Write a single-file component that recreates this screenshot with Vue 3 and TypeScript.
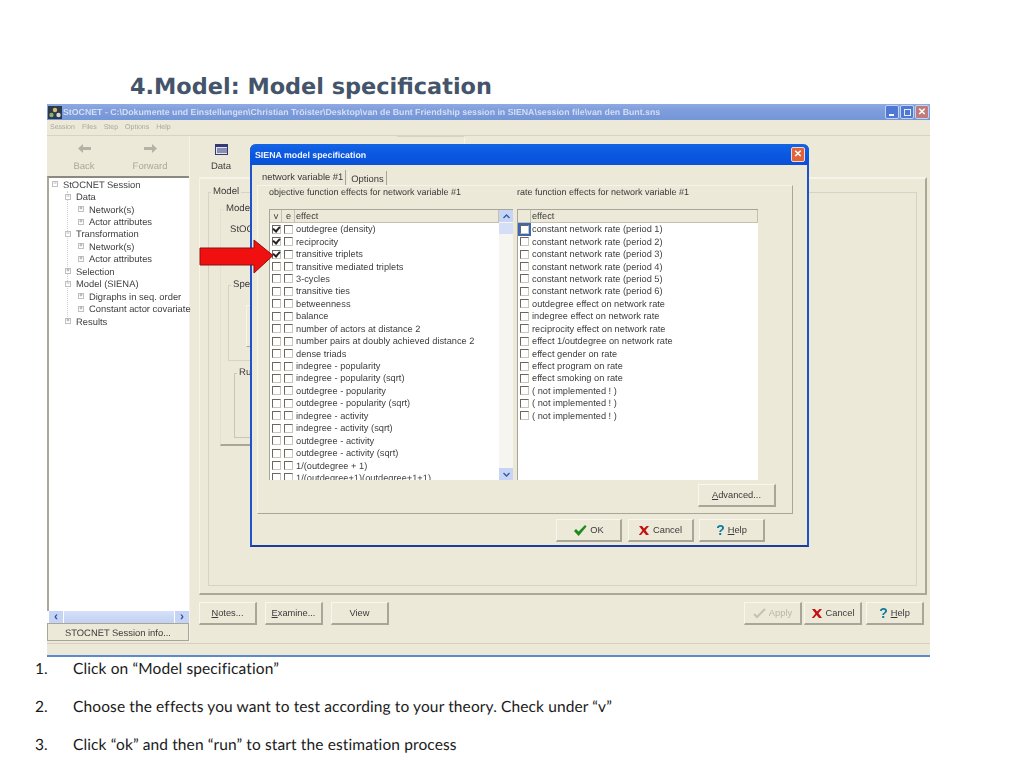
<script setup lang="ts">
const treeRows = [
  { t: 'StOCNET Session', l: 0, s: '−' },
  { t: 'Data', l: 1, s: '−' },
  { t: 'Network(s)', l: 2, s: '+' },
  { t: 'Actor attributes', l: 2, s: '+' },
  { t: 'Transformation', l: 1, s: '−' },
  { t: 'Network(s)', l: 2, s: '+' },
  { t: 'Actor attributes', l: 2, s: '+' },
  { t: 'Selection', l: 1, s: '+' },
  { t: 'Model (SIENA)', l: 1, s: '−' },
  { t: 'Digraphs in seq. order', l: 2, s: '+' },
  { t: 'Constant actor covariate', l: 2, s: '+' },
  { t: 'Results', l: 1, s: '+' }
]
const effects = [
  'outdegree (density)', 'reciprocity', 'transitive triplets', 'transitive mediated triplets', '3-cycles',
  'transitive ties', 'betweenness', 'balance', 'number of actors at distance 2',
  'number pairs at doubly achieved distance 2', 'dense triads', 'indegree - popularity',
  'indegree - popularity (sqrt)', 'outdegree - popularity', 'outdegree - popularity (sqrt)',
  'indegree - activity', 'indegree - activity (sqrt)', 'outdegree - activity', 'outdegree - activity (sqrt)',
  '1/(outdegree + 1)', '1/(outdegree+1)(outdegree+1+1)'
]
const rates = [
  'constant network rate (period 1)', 'constant network rate (period 2)', 'constant network rate (period 3)',
  'constant network rate (period 4)', 'constant network rate (period 5)', 'constant network rate (period 6)',
  'outdegree effect on network rate', 'indegree effect on network rate', 'reciprocity effect on network rate',
  'effect 1/outdegree on network rate', 'effect gender  on rate', 'effect program on rate',
  'effect smoking on rate', '( not implemented ! )', '( not implemented ! )', '( not implemented ! )'
]
</script>

<template>
  <div class="slide">
    <h1 class="title">4.Model: Model specification</h1>

    <div class="win">
      <div class="titlebar">
        <svg class="appicon" width="14" height="13" viewBox="0 0 14 13">
          <rect width="14" height="13" fill="#2c3a4a" />
          <circle cx="7" cy="4" r="2.2" fill="#d8c070" />
          <circle cx="3.5" cy="9" r="2.2" fill="#8fb06a" />
          <circle cx="10.5" cy="9" r="2.2" fill="#d8d8d8" />
        </svg>
        <span class="wintitle">StOCNET - C:\Dokumente und Einstellungen\Christian Tröister\Desktop\van de Bunt Friendship session in SIENA\session file\van den Bunt.sns</span>
        <span class="capbtns">
          <span class="cap blue"><i class="minbar"></i></span>
          <span class="cap blue"><i class="restore"></i></span>
          <span class="cap redfade">✕</span>
        </span>
      </div>

      <div class="menubar">
        <span>Session</span><span>Files</span><span>Step</span><span>Options</span><span>Help</span>
      </div>

      <div class="body">
        <aside class="left">
          <div class="nav">
            <div class="navitem">
              <svg width="13" height="9" viewBox="0 0 13 9"><path d="M0 4.5 5 0v3h8v3H5v3z" fill="#b4b2a4" /></svg>
              <span>Back</span>
            </div>
            <div class="navitem">
              <svg width="13" height="9" viewBox="0 0 13 9"><path d="M13 4.5 8 0v3H0v3h8v3z" fill="#b4b2a4" /></svg>
              <span>Forward</span>
            </div>
          </div>
          <div class="tree">
            <div v-for="(r, i) in treeRows" :key="i" class="treerow" :class="'lvl' + r.l">
              <span class="exp">{{ r.s }}</span>
              <span class="treetext">{{ r.t }}</span>
            </div>
          </div>
          <div class="hscroll">
            <span class="hbtn">‹</span>
            <span class="hthumb"></span>
            <span class="hbtn">›</span>
          </div>
          <div class="infobtn">STOCNET Session info...</div>
        </aside>

        <main class="right">
          <div class="toolbar">
            <div class="toolitem">
              <svg width="13" height="11" viewBox="0 0 13 11">
                <rect x="0.5" y="0.5" width="12" height="10" fill="#dfe3f4" stroke="#333a70" />
                <rect x="1" y="1" width="11" height="2" fill="#333a70" />
                <path d="M3 4v5M5 4v5M7 4v5M9 4v5M11 4v5" stroke="#333a70" />
              </svg>
              <span>Data</span>
            </div>
            <div class="backtab"></div>
          </div>

          <div class="panel">
            <div class="group outer">
              <span class="grouplabel lab-model">Model</span>
              <div class="group model2">
                <span class="grouplabel lab-model2">Model</span>
                <div class="stoc">StOC</div>
                <div class="group spec">
                  <span class="grouplabel lab-spe">Spe</span>
                  <div class="specbtn"></div>
                </div>
                <div class="group run">
                  <span class="grouplabel lab-ru">Ru</span>
                </div>
              </div>
            </div>
          </div>

          <div class="footer">
            <button class="btn wide"><span><u>N</u>otes...</span></button>
            <button class="btn wide"><span><u>E</u>xamine...</span></button>
            <button class="btn wide">View</button>
            <span class="spacer"></span>
            <button class="btn wide disabled">
              <svg width="13" height="11" viewBox="0 0 13 11"><path d="M1 6l3 3 8-8" fill="none" stroke="#c4c2b4" stroke-width="2" /></svg>
              <span>Apply</span>
            </button>
            <button class="btn wide tight">
              <svg width="12" height="11" viewBox="0 0 12 11"><path d="M1 1h3l2 2.6L8.6 1H11L7.5 5.2 11 10H8L5.6 7 3 10H.8l3.6-4.6z" fill="#c41212" /></svg>
              <span>Cancel</span>
            </button>
            <button class="btn wide mid"><span class="q">?</span><span><u>H</u>elp</span></button>
          </div>
        </main>
      </div>

      <div class="statusbar"></div>

      <div class="dialog">
        <div class="dlgtitle">
          <span>SIENA model specification</span>
          <span class="dlgclose">✕</span>
        </div>
        <div class="dlgbody">
          <div class="tabs">
            <span class="tab active">network variable #1</span>
            <span class="tab">Options</span>
          </div>
          <div class="tabpanel">
            <div class="lists">
              <div class="listcol leftcol">
                <div class="listhead">objective function effects for network variable #1</div>
                <div class="listbox">
                  <div class="listinner">
                    <div class="hdr">
                      <span class="hc hv">v</span><span class="hc he">e</span><span class="hc hn">effect</span>
                    </div>
                    <div v-for="(e, i) in effects" :key="i" class="row">
                      <span class="cb" :class="{ on: i < 3 }"></span>
                      <span class="cb"></span>
                      <span class="rowtext">{{ e }}</span>
                    </div>
                  </div>
                  <div class="vscroll">
                    <span class="vbtn">
                      <svg width="7" height="5" viewBox="0 0 7 5"><path d="M.5 4 3.5 1l3 3" fill="none" stroke="#3b5a9c" stroke-width="1.4" /></svg>
                    </span>
                    <span class="vthumb"></span>
                    <span class="vfill"></span>
                    <span class="vbtn">
                      <svg width="7" height="5" viewBox="0 0 7 5"><path d="M.5 1l3 3 3-3" fill="none" stroke="#3b5a9c" stroke-width="1.4" /></svg>
                    </span>
                  </div>
                </div>
              </div>
              <div class="listcol rightcol">
                <div class="listhead">rate function effects for network variable #1</div>
                <div class="listbox">
                  <div class="listinner">
                    <div class="hdr">
                      <span class="hc hr0"></span><span class="hc hn">effect</span>
                    </div>
                    <div v-for="(e, i) in rates" :key="i" class="row">
                      <span class="cb" :class="{ focus: i === 0 }"></span>
                      <span class="rowtext">{{ e }}</span>
                    </div>
                  </div>
                </div>
              </div>
            </div>
            <div class="advrow">
              <button class="btn adv"><span><u>A</u>dvanced...</span></button>
            </div>
          </div>
          <div class="dlgbtns">
            <button class="btn dbtn">
              <svg width="14" height="11" viewBox="0 0 14 11"><path d="M1 6l2-2 2.6 2.6L12 0l1.6 1.5L5.6 11z" fill="#1f8a1f" /></svg>
              <span>OK</span>
            </button>
            <button class="btn dbtn">
              <svg width="12" height="11" viewBox="0 0 12 11"><path d="M1 1h3l2 2.6L8.6 1H11L7.5 5.2 11 10H8L5.6 7 3 10H.8l3.6-4.6z" fill="#c41212" /></svg>
              <span>Cancel</span>
            </button>
            <button class="btn dbtn"><span class="q">?</span><span><u>H</u>elp</span></button>
          </div>
        </div>
      </div>

      <svg class="arrow" width="76" height="36" viewBox="0 0 76 36">
        <path d="M1 9H55V1L74 16.5 55 34V26H1z" fill="#f01010" stroke="#8a1010" stroke-width="1" />
      </svg>
    </div>

    <div class="blueline"></div>

    <ol class="steps">
      <li><span class="num">1.</span>Click on “Model specification”</li>
      <li><span class="num">2.</span>Choose the effects you want to test according to your theory. Check under “v”</li>
      <li><span class="num">3.</span>Click “ok” and then “run” to start the estimation process</li>
    </ol>
  </div>
</template>

<style>
html, body { margin: 0; background: #fff; }
</style>

<style scoped>
.slide {
  width: 1024px;
  height: 768px;
  overflow: hidden;
  background: #fff;
  font-family: "Liberation Sans", Arial, sans-serif;
  text-rendering: geometricPrecision;
}
.title {
  margin: 0;
  height: 104px;
  box-sizing: border-box;
  padding: 72px 0 0 130px;
  font: bold 22.4px/30px "DejaVu Sans", Verdana, sans-serif;
  color: #44546a;
}
.win {
  position: relative;
  width: 883px;
  height: 551px;
  margin-left: 47px;
  background: #ece9d8;
  display: flex;
  flex-direction: column;
  color: #3a3a3a;
  font-size: 9.5px;
  filter: blur(0.3px);
}
.blueline {
  width: 883px;
  height: 2px;
  margin-left: 47px;
  background: #5a8ccc;
}
.titlebar {
  height: 16px;
  flex: none;
  display: flex;
  align-items: center;
  padding-left: 1px;
  background: linear-gradient(#8daae2, #7f9ddc 40%, #7496d8);
}
.appicon { flex: none; }
.wintitle {
  margin-left: 1px;
  font-weight: bold;
  font-size: 8.78px;
  color: #d4def2;
  white-space: nowrap;
}
.capbtns {
  margin-left: auto;
  display: flex;
  gap: 1px;
  padding-right: 1px;
}
.cap {
  width: 14px;
  height: 14px;
  border-radius: 2px;
  border: 1px solid #c4d2ee;
  box-sizing: border-box;
  display: flex;
  align-items: center;
  justify-content: center;
  position: relative;
  font-size: 10px;
  color: #fff;
  font-weight: bold;
}
.blue { background: #4f79d4; }
.redfade { background: #c07a7a; }
.minbar { position: absolute; left: 3px; bottom: 2px; width: 5px; height: 2px; background: #fff; }
.restore { width: 5px; height: 5px; border: 1px solid #e6ecf8; }
.menubar {
  height: 16px;
  flex: none;
  display: flex;
  align-items: center;
  gap: 7px;
  padding-left: 3px;
  font-size: 7px;
  color: #aaa89c;
  border-bottom: 1px solid #d6d3c4;
  box-sizing: border-box;
}
.body {
  flex: 1;
  display: flex;
  min-height: 0;
}
.left {
  width: 143px;
  flex: none;
  display: flex;
  flex-direction: column;
  border-right: 1px solid #f4f2e8;
  box-sizing: border-box;
}
.nav {
  height: 40px;
  flex: none;
  display: flex;
  padding-left: 21px;
  gap: 34px;
}
.navitem {
  width: 32px;
  display: flex;
  flex-direction: column;
  align-items: center;
  padding-top: 8px;
  gap: 8px;
  color: #aaa89c;
  font-size: 9.5px;
}
.tree {
  position: relative;
  flex: 1;
  background: #fff;
  border-top: 2px solid #8c8a80;
  border-left: 2px solid #aca899;
  min-height: 0;
}
.tree::before {
  content: "";
  position: absolute;
  left: 18px;
  top: 13px;
  height: 130px;
  border-left: 1px dotted #d0d0d0;
}
.treerow {
  position: relative;
  height: 12.45px;
  display: flex;
  align-items: center;
  white-space: nowrap;
  font-size: 9.4px;
  color: #404040;
}
.exp {
  flex: none;
  width: 6px;
  height: 6px;
  border: 1px solid #c0c0c0;
  background: #fff;
  box-sizing: border-box;
  font-size: 6px;
  line-height: 4px;
  text-align: center;
  color: #666;
  margin-right: 5px;
}
.lvl0 { padding-left: 3px; }
.lvl1 { padding-left: 16px; }
.lvl2 { padding-left: 29px; }
.hscroll {
  height: 12px;
  flex: none;
  display: flex;
  background: #fff;
  padding-left: 2px;
}
.hbtn {
  width: 14px;
  height: 12px;
  background: #c5d4f4;
  color: #2c4f9c;
  font-size: 12px;
  font-weight: bold;
  line-height: 10px;
  text-align: center;
}
.hthumb {
  flex: 1;
  margin: 0 1px;
  background: linear-gradient(#d6e0f8, #c2d1f3);
}
.infobtn {
  height: 18px;
  flex: none;
  line-height: 17px;
  text-align: center;
  border: 1px solid #a8a698;
  box-sizing: border-box;
  font-size: 9.4px;
  margin-bottom: 1px;
}
.right {
  flex: 1;
  display: flex;
  flex-direction: column;
  padding-left: 9px;
  min-width: 0;
}
.toolbar {
  height: 41px;
  display: flex;
  flex: none;
}
.toolitem {
  width: 44px;
  display: flex;
  flex-direction: column;
  align-items: center;
  padding-top: 8px;
  gap: 6px;
  font-size: 9.5px;
  box-sizing: border-box;
}
.backtab {
  margin-left: 154px;
  width: 67px;
  height: 30px;
  border-top: 1px solid #d6d3c4;
  border-right: 1px solid #f6f4ea;
}
.panel {
  height: 418px;
  flex: none;
  width: 728px;
  padding: 13px 8px 10px 8px;
  box-sizing: border-box;
  border-top: 2px solid #f6f4ea;
  border-left: 1px solid #f6f4ea;
  border-right: 2px solid #aca899;
  border-bottom: 2px solid #aca899;
}
.group {
  position: relative;
  box-sizing: border-box;
}
.outer {
  height: 394px;
  border: 1px solid #d6d3c4;
  padding: 16px 0 0 11px;
}
.grouplabel {
  position: absolute;
  background: #ece9d8;
  padding: 0 2px;
  font-size: 9.6px;
  top: -7px;
}
.lab-model { left: 2px; }
.lab-model2 { left: 3px; }
.model2 {
  width: 500px;
  height: 237px;
  border: 1px solid #e4e1d2;
  border-bottom: 2px solid #a8a698;
  padding: 14px 0 0 7px;
}
.stoc {
  height: 61px;
  padding-left: 2px;
  font-size: 9.6px;
}
.spec {
  width: 400px;
  height: 76px;
  border: 1px solid #d6d3c4;
  padding: 19px 0 0 17px;
}
.lab-spe { left: 2px; }
.specbtn {
  width: 200px;
  height: 40px;
  border-left: 1px solid #f8f6ec;
  border-top: 1px solid #f8f6ec;
  border-bottom: 1px solid #a8a698;
}
.run {
  width: 400px;
  height: 65px;
  margin: 12px 0 0 6px;
  border: 1px solid #c8c6b8;
}
.lab-ru { left: 2px; }
.footer {
  flex: none;
  display: flex;
  gap: 8px;
  padding-top: 7px;
  padding-right: 6px;
}
.spacer { flex: 1; }
.btn {
  font-family: "Liberation Sans", Arial, sans-serif;
  font-size: 9.3px;
  color: #3a3a3a;
  background: #ece9d8;
  border: 1px solid;
  border-color: #f8f6ee #a8a698 #a8a698 #f8f6ee;
  box-sizing: border-box;
  height: 23px;
  padding: 0;
  display: flex;
  align-items: center;
  justify-content: center;
  gap: 3px;
  border-right-width: 2px;
  border-bottom-width: 2px;
}
.wide { width: 58px; }
.tight { margin-left: -6px; }
.mid { margin-left: -4px; }
.disabled { color: #b8b6a8; }
.q {
  color: #0f7a9c;
  font-weight: bold;
  font-size: 14px;
  line-height: 12px;
}
.statusbar {
  flex: none;
  height: 11px;
  border-top: 1px solid #d9cfc0;
  margin-top: 1px;
}
.dialog {
  position: absolute;
  left: 203px;
  top: 40px;
  width: 559px;
  height: 403px;
  box-sizing: border-box;
  background: #ece9d8;
  border: 2px solid #1f52cc;
  border-top: 0;
  border-bottom-color: #1c3d9e;
  border-radius: 6px 6px 0 0;
  display: flex;
  flex-direction: column;
}
.dlgtitle {
  flex: none;
  height: 21px;
  margin: 0 -2px;
  border-radius: 6px 6px 0 0;
  background: linear-gradient(#1464e4, #0a58e0 50%, #0a50d8);
  display: flex;
  align-items: center;
  padding: 0 4px 0 5px;
  color: #f0f4ff;
  font-weight: bold;
  font-size: 8.8px;
}
.dlgclose {
  margin-left: auto;
  width: 14px;
  height: 15px;
  background: #e0633a;
  border: 1px solid #f2d8cc;
  border-radius: 2px;
  box-sizing: border-box;
  text-align: center;
  line-height: 13px;
  color: #fff;
  font-size: 10px;
}
.dlgbody {
  flex: 1;
  padding: 2px 14px 0 5px;
  display: flex;
  flex-direction: column;
  min-height: 0;
}
.tabs {
  flex: none;
  height: 18px;
  display: flex;
  padding-left: 5px;
  align-items: flex-end;
  gap: 2px;
}
.tab {
  font-size: 9.4px;
  padding: 2px 2px 1px 2px;
  border-right: 1px solid #a8a698;
  border-left: 1px solid #f6f4ea;
  white-space: nowrap;
}
.tab.active {
  padding: 1px 2px 3px 0;
  border-left: 0;
}
.tabpanel {
  height: 329px;
  flex: none;
  box-sizing: border-box;
  border-top: 1px solid #f6f4ea;
  border-left: 1px solid #f6f4ea;
  border-right: 1px solid #a8a698;
  border-bottom: 1px solid #a8a698;
  padding-left: 11px;
  padding-right: 16px;
}
.lists {
  display: flex;
  gap: 4px;
}
.listhead {
  height: 23px;
  font-size: 9px;
  line-height: 12px;
  white-space: nowrap;
}
.leftcol { width: 244px; }
.rightcol { width: 241px; }
.listbox {
  height: 271px;
  background: #fff;
  display: flex;
  overflow: hidden;
  border-left: 1px solid #a8a698;
  border-top: 1px solid #a8a698;
  box-sizing: border-box;
}
.listinner {
  flex: 1;
  min-width: 0;
  overflow: hidden;
}
.hdr {
  height: 13px;
  box-sizing: border-box;
  background: #ece9d8;
  display: flex;
  border-bottom: 1px solid #c4c1b0;
  font-size: 9.2px;
}
.hc {
  border-right: 1px solid #c4c1b0;
  line-height: 13px;
  padding-left: 1px;
  box-sizing: border-box;
}
.hv { width: 12px; text-align: center; }
.he { width: 13px; text-align: center; }
.hn { flex: 1; padding-left: 1px; }
.hr0 { width: 13px; }
.row {
  height: 12.45px;
  display: flex;
  align-items: center;
  padding-left: 2px;
  white-space: nowrap;
  font-size: 9.25px;
  color: #404040;
}
.cb {
  flex: none;
  position: relative;
  width: 9px;
  height: 9px;
  margin-right: 3px;
  border: 1px solid;
  border-color: #6a685e #c8c6b8 #c8c6b8 #6a685e;
  box-sizing: border-box;
  background: #fff;
}
.cb.on::after {
  content: "";
  position: absolute;
  left: 1px;
  top: -1px;
  width: 3px;
  height: 5px;
  border: solid #222;
  border-width: 0 2px 2px 0;
  transform: rotate(40deg);
}
.cb.focus {
  outline: 2px solid #3a66b4;
}
.vscroll {
  flex: none;
  width: 14px;
  display: flex;
  flex-direction: column;
  background: #f6f5f0;
}
.vbtn {
  height: 12px;
  flex: none;
  background: #c6d5f5;
  display: flex;
  align-items: center;
  justify-content: center;
}
.vthumb {
  height: 11px;
  flex: none;
  background: #d4def6;
  margin-top: 1px;
}
.vfill { flex: 1; }
.advrow {
  display: flex;
  justify-content: flex-end;
  padding-top: 4px;
}
.adv { width: 78px; }
.dlgbtns {
  flex: none;
  display: flex;
  justify-content: flex-end;
  gap: 5.5px;
  padding: 5px 28px 0 0;
}
.dbtn { width: 66px; height: 23px; }
.arrow {
  position: absolute;
  left: 152px;
  top: 135px;
}
.steps {
  list-style: none;
  margin: 0;
  padding: 2px 0 0 35px;
  font-family: Lato, "Open Sans", sans-serif;
  font-size: 15.5px;
  letter-spacing: 0.12px;
  color: #1a1a1a;
}
.steps li {
  height: 38px;
  line-height: 20px;
  white-space: nowrap;
}
.num {
  display: inline-block;
  width: 38px;
}
</style>
